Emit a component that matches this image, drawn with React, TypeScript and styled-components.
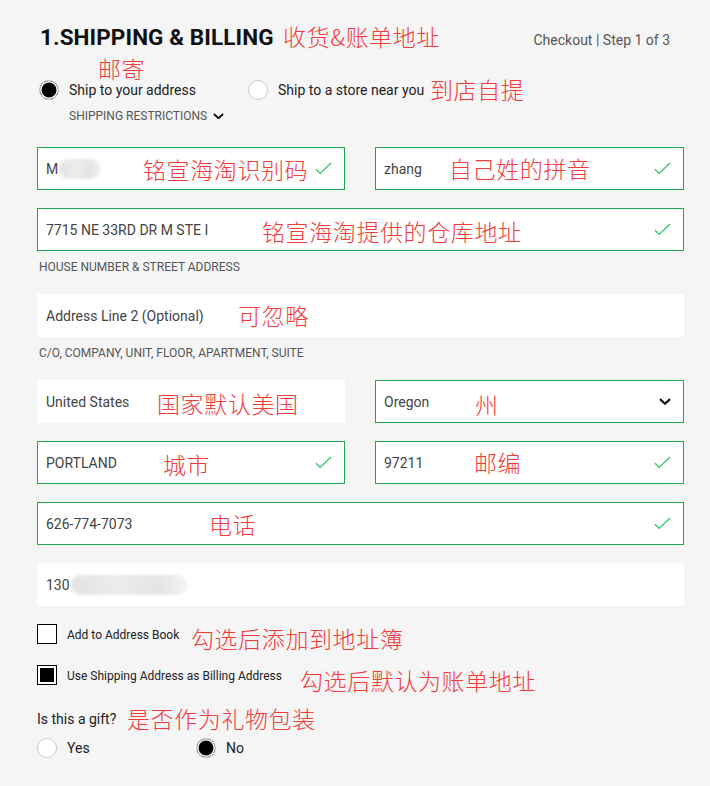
import React from 'react';
import styled, { createGlobalStyle } from 'styled-components';

const GlobalStyle = createGlobalStyle`
  html, body {
    margin: 0;
    padding: 0;
    background: #f5f5f5;
  }
  body {
    font-family: Roboto, "Liberation Sans", sans-serif;
    color: #222;
  }
`;

const Page = styled.div`
  width: 647px;
  padding: 22px 26px 28px 37px;
`;

const Header = styled.header`
  position: relative;
  height: 30px;
  display: flex;
  justify-content: space-between;
  align-items: center;
`;

const Title = styled.h1`
  margin: 0 0 0 3px;
  font-family: Roboto, "Liberation Sans", sans-serif;
  font-size: 22.5px;
  line-height: 30px;
  font-weight: 700;
  letter-spacing: 0.1px;
  color: #111;
`;

const StepText = styled.span`
  margin: 5px 14px 0 0;
  font-size: 14px;
  color: #555;
`;

// red handwritten-style notes laid over the screenshot
const Note = styled.span<{ $x: number; $y: number }>`
  position: absolute;
  left: ${(p) => p.$x}px;
  top: ${(p) => p.$y}px;
  font-family: "Noto Sans CJK SC", "Noto Sans", sans-serif;
  font-weight: 300;
  font-size: 23px;
  line-height: 24px;
  letter-spacing: 0.6px;
  color: #f23c3c;
  white-space: nowrap;
  pointer-events: none;
`;

const ShipOptions = styled.div`
  position: relative;
  margin-top: 28px;
  display: flex;
  align-items: center;
  padding-left: 2px;
`;

const RadioLabel = styled.label<{ $width?: number }>`
  display: flex;
  align-items: center;
  gap: 10px;
  width: ${(p) => (p.$width ? `${p.$width}px` : 'auto')};
  font-size: 14px;
  color: #222;
`;

const RadioDot = styled.span<{ $on?: boolean }>`
  width: 20px;
  height: 20px;
  box-sizing: border-box;
  border-radius: 50%;
  border: 1px solid #c9c9c9;
  background: ${(p) => (p.$on ? '#000' : '#fff')};
  box-shadow: ${(p) => (p.$on ? 'inset 0 0 0 1.5px #fff' : 'none')};
  flex: none;
`;

const Restrictions = styled.div`
  margin: 8px 0 0 32px;
  display: flex;
  align-items: center;
  gap: 6px;
  font-size: 12px;
  line-height: 16px;
  color: #555;
`;

const Form = styled.div`
  margin-top: 23px;
  display: flex;
  flex-direction: column;
`;

const Row = styled.div<{ $gap?: number }>`
  display: grid;
  grid-template-columns: 308px 309px;
  column-gap: 30px;
  margin-top: ${(p) => p.$gap ?? 0}px;
`;

const Field = styled.div<{ $valid?: boolean; $gap?: number }>`
  position: relative;
  height: 43px;
  box-sizing: border-box;
  margin-top: ${(p) => p.$gap ?? 0}px;
  padding: 0 12px 0 8px;
  display: flex;
  align-items: center;
  justify-content: space-between;
  background: #fff;
  border: 1px solid ${(p) => (p.$valid ? '#1fa84f' : '#fff')};
  font-size: 14px;
  color: #444;
`;

const Value = styled.span`
  display: flex;
  align-items: center;
`;

const Blur = styled.span<{ $w: number }>`
  display: inline-block;
  width: ${(p) => p.$w}px;
  height: 20px;
  margin-left: 1px;
  border-radius: 10px;
  background: linear-gradient(90deg, #e2e2e2, #ececec 40%, #e4e4e6 75%, #f3f3f3);
  filter: blur(1.5px);
`;

const Helper = styled.div`
  margin: 9px 0 0 2px;
  font-size: 12px;
  line-height: 14px;
  color: #555;
`;

const CheckRow = styled.label<{ $gap: number }>`
  position: relative;
  margin-top: ${(p) => p.$gap}px;
  display: flex;
  align-items: center;
  gap: 10px;
  font-size: 12px;
  line-height: 16px;
  color: #222;
`;

const CheckText = styled.span`
  padding-top: 2px;
`;

const Box = styled.span<{ $on?: boolean }>`
  width: 20px;
  height: 20px;
  box-sizing: border-box;
  border: 1px solid #000;
  background: ${(p) => (p.$on ? '#000' : '#fff')};
  box-shadow: ${(p) => (p.$on ? 'inset 0 0 0 2px #fff' : 'none')};
  flex: none;
`;

const GiftLabel = styled.div`
  position: relative;
  margin-top: 25px;
  font-size: 14px;
  line-height: 18px;
  color: #222;
`;

const GiftOptions = styled.div`
  margin-top: 10px;
  display: flex;
  align-items: center;
`;

const Check = () => (
  <svg width="17" height="13" viewBox="0 0 17 13" fill="none">
    <path d="M1 7.2 L5.2 11.4 L16 1" stroke="#34c26a" strokeWidth="1.3" />
  </svg>
);

const Chevron = ({ size = 12 }: { size?: number }) => (
  <svg width={size} height={size * 0.6} viewBox="0 0 12 7" fill="none">
    <path d="M1 1 L6 5.6 L11 1" stroke="#111" strokeWidth="2.2" />
  </svg>
);

const App = () => {
  return (
    <Page>
      <GlobalStyle />
      <Header>
        <Title>1.SHIPPING &amp; BILLING</Title>
        <StepText>Checkout | Step 1 of 3</StepText>
        <Note $x={246} $y={2}>收货&amp;账单地址</Note>
      </Header>

      <ShipOptions>
        <RadioLabel $width={209}>
          <RadioDot $on />
          Ship to your address
        </RadioLabel>
        <RadioLabel>
          <RadioDot />
          Ship to a store near you
        </RadioLabel>
        <Note $x={61} $y={-24}>邮寄</Note>
        <Note $x={393} $y={-3}>到店自提</Note>
      </ShipOptions>
      <Restrictions>
        SHIPPING RESTRICTIONS
        <Chevron size={11} />
      </Restrictions>

      <Form>
        <Row>
          <Field $valid>
            <Value>
              M<Blur $w={42} />
            </Value>
            <Check />
            <Note $x={105} $y={9}>铭宣海淘识别码</Note>
          </Field>
          <Field $valid>
            <Value>zhang</Value>
            <Check />
            <Note $x={73} $y={8}>自己姓的拼音</Note>
          </Field>
        </Row>

        <Field $valid $gap={18}>
          <Value>7715 NE 33RD DR M STE I</Value>
          <Check />
          <Note $x={224} $y={10}>铭宣海淘提供的仓库地址</Note>
        </Field>
        <Helper>HOUSE NUMBER &amp; STREET ADDRESS</Helper>

        <Field $gap={20}>
          <Value>Address Line 2 (Optional)</Value>
          <Note $x={200} $y={8}>可忽略</Note>
        </Field>
        <Helper>C/O, COMPANY, UNIT, FLOOR, APARTMENT, SUITE</Helper>

        <Row $gap={20}>
          <Field>
            <Value>United States</Value>
            <Note $x={119} $y={10}>国家默认美国</Note>
          </Field>
          <Field $valid>
            <Value>Oregon</Value>
            <Chevron size={12} />
            <Note $x={99} $y={11}>州</Note>
          </Field>
        </Row>

        <Row $gap={18}>
          <Field $valid>
            <Value>PORTLAND</Value>
            <Check />
            <Note $x={125} $y={10}>城市</Note>
          </Field>
          <Field $valid>
            <Value>97211</Value>
            <Check />
            <Note $x={98} $y={8}>邮编</Note>
          </Field>
        </Row>

        <Field $valid $gap={18}>
          <Value>626-774-7073</Value>
          <Check />
          <Note $x={171} $y={9}>电话</Note>
        </Field>

        <Field $gap={18}>
          <Value>
            130<Blur $w={116} />
          </Value>
        </Field>
      </Form>

      <CheckRow $gap={18}>
        <Box />
        <CheckText>Add to Address Book</CheckText>
        <Note $x={154} $y={2}>勾选后添加到地址簿</Note>
      </CheckRow>
      <CheckRow $gap={21}>
        <Box $on />
        <CheckText>Use Shipping Address as Billing Address</CheckText>
        <Note $x={263} $y={3}>勾选后默认为账单地址</Note>
      </CheckRow>

      <GiftLabel>
        Is this a gift?
        <Note $x={90} $y={-4}>是否作为礼物包装</Note>
      </GiftLabel>
      <GiftOptions>
        <RadioLabel $width={159}>
          <RadioDot />
          Yes
        </RadioLabel>
        <RadioLabel>
          <RadioDot $on />
          No
        </RadioLabel>
      </GiftOptions>
    </Page>
  );
};

export default App;
